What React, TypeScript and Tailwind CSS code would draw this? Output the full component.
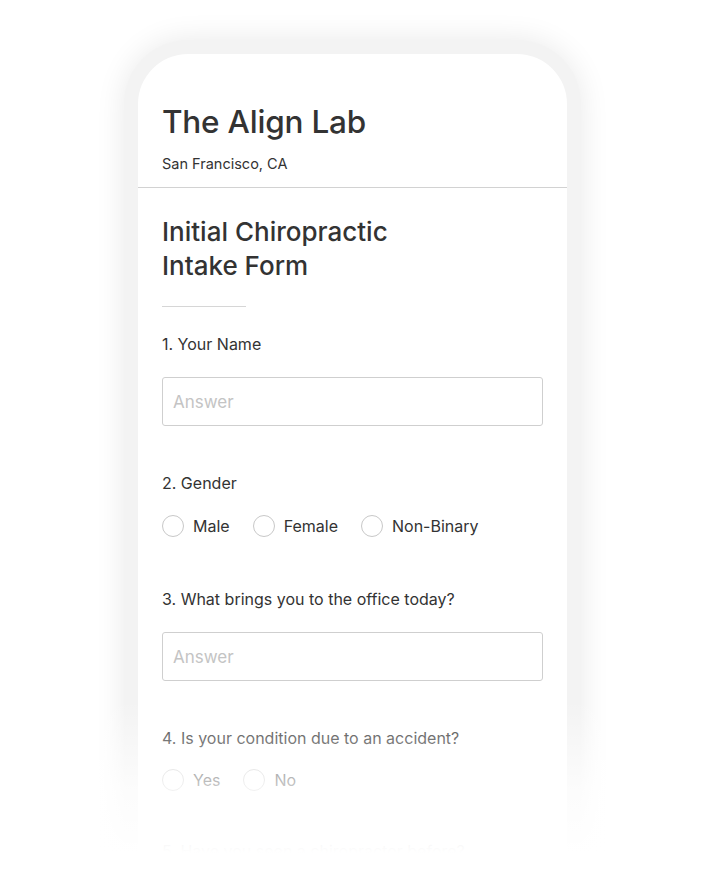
const font = { fontFamily: 'Inter, "Open Sans", sans-serif' };

function Radio({ label }: { label: string }) {
    return (
        <label className="flex flex-row items-center gap-[9px]">
            <span className="h-[22px] w-[22px] rounded-full border border-[#c8c8c8] bg-white" />
            <span className="text-[16px] text-[#333]">{label}</span>
        </label>
    );
}

function AnswerInput() {
    return (
        <input
            className="h-[49px] w-[381px] rounded-[3px] border border-[#cfcfcf] px-[10px] text-[17px] text-[#333] placeholder:text-[#c4c4c4] focus:outline-none"
            type="text"
            placeholder="Answer"
        />
    );
}

export default function App() {
    return (
        <div
            className="relative h-[880px] w-[704px] overflow-hidden bg-white"
            style={font}
        >
            <div className="ml-[124px] mt-[40px] h-[900px] w-[457px] rounded-t-[64px] bg-[#f3f3f3] px-[14px] pt-[14px] shadow-[0_0_30px_rgba(0,0,0,0.09)]">
                <div className="h-full rounded-t-[50px] bg-white">
                    <div className="px-[24px] pb-[13px] pt-[48px]">
                        <h1 className="text-[31.5px] font-medium leading-[40px] tracking-[-0.2px] text-[#333]">
                            The Align Lab
                        </h1>
                        <p className="mt-[12px] text-[14.5px] leading-[20px] text-[#333]">
                            San Francisco, CA
                        </p>
                    </div>
                    <div className="h-px bg-[#d2d2d2]" />
                    <div className="flex flex-col px-[24px] pt-[27px]">
                        <h2 className="text-[26px] font-medium leading-[34px] text-[#333]">
                            Initial Chiropractic
                            <br />
                            Intake Form
                        </h2>
                        <div className="mt-[23px] h-px w-[84px] bg-[#d6d6d6]" />
                        <p className="mt-[26px] text-[16px] leading-[22px] text-[#333]">
                            1. Your Name
                        </p>
                        <div className="mt-[22px]">
                            <AnswerInput />
                        </div>
                        <p className="mt-[46px] text-[16px] leading-[22px] text-[#333]">
                            2. Gender
                        </p>
                        <div className="mt-[20px] flex flex-row gap-[23px]">
                            <Radio label="Male" />
                            <Radio label="Female" />
                            <Radio label="Non-Binary" />
                        </div>
                        <p className="mt-[50px] text-[16px] leading-[22px] text-[#333]">
                            3. What brings you to the office today?
                        </p>
                        <div className="mt-[22px]">
                            <AnswerInput />
                        </div>
                        <p className="mt-[46px] text-[16px] leading-[22px] text-[#333]">
                            4. Is your condition due to an accident?
                        </p>
                        <div className="mt-[19px] flex flex-row gap-[23px]">
                            <Radio label="Yes" />
                            <Radio label="No" />
                        </div>
                        <p className="mt-[48px] text-[16px] leading-[22px] text-[#333]">
                            5. Have you seen a chiropractor before?
                        </p>
                    </div>
                </div>
            </div>
            <div className="absolute inset-x-0 bottom-0 h-[180px] bg-linear-to-b from-white/0 via-white/75 to-white to-[85%]" />
        </div>
    );
}
